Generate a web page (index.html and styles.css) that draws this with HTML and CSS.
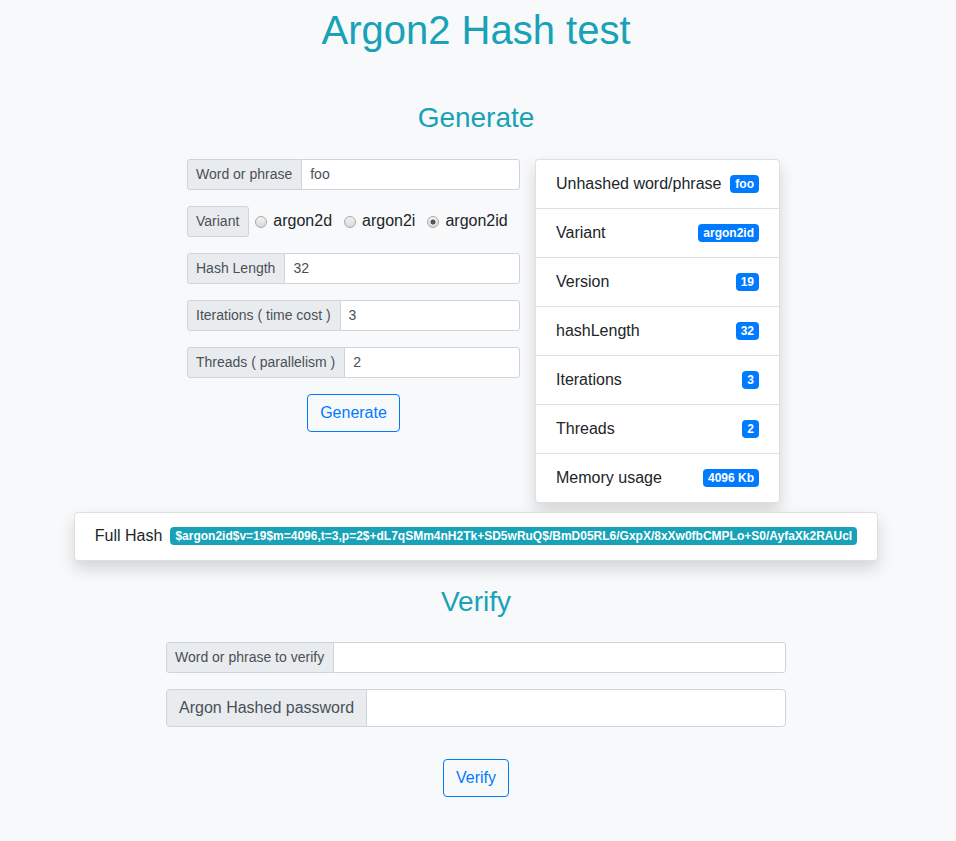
FILE: index.html
```html
<!DOCTYPE html>
<html lang="en">
<head>
<meta charset="utf-8">
<title>Argon2 Hash test</title>
<link rel="stylesheet" href="styles.css">
</head>
<body>
<div class="page">
  <h1 class="title">Argon2 Hash test</h1>
  <h3 class="section-title gen-title">Generate</h3>

  <div class="gen-row">
    <form class="gen-form">
      <div class="input-group sm">
        <span class="addon">Word or phrase</span>
        <input class="field" type="text" value="foo">
      </div>
      <div class="variant-row">
        <span class="addon variant-addon">Variant</span>
        <label class="radio-item"><input type="radio" name="variant" class="radio"><span>argon2d</span></label>
        <label class="radio-item"><input type="radio" name="variant" class="radio"><span>argon2i</span></label>
        <label class="radio-item"><input type="radio" name="variant" class="radio" checked><span>argon2id</span></label>
      </div>
      <div class="input-group sm">
        <span class="addon">Hash Length</span>
        <input class="field" type="text" value="32">
      </div>
      <div class="input-group sm">
        <span class="addon">Iterations ( time cost )</span>
        <input class="field" type="text" value="3">
      </div>
      <div class="input-group sm">
        <span class="addon">Threads ( parallelism )</span>
        <input class="field" type="text" value="2">
      </div>
      <div class="btn-row">
        <button type="button" class="btn-outline">Generate</button>
      </div>
    </form>

    <ul class="card list">
      <li class="list-item"><span>Unhashed word/phrase</span><span class="badge primary">foo</span></li>
      <li class="list-item"><span>Variant</span><span class="badge primary">argon2id</span></li>
      <li class="list-item"><span>Version</span><span class="badge primary">19</span></li>
      <li class="list-item"><span>hashLength</span><span class="badge primary">32</span></li>
      <li class="list-item"><span>Iterations</span><span class="badge primary">3</span></li>
      <li class="list-item"><span>Threads</span><span class="badge primary">2</span></li>
      <li class="list-item"><span>Memory usage</span><span class="badge primary">4096 Kb</span></li>
    </ul>
  </div>

  <div class="hash-wrap">
    <div class="card hash-card">
      <span>Full Hash</span>
      <span class="badge info">$argon2id$v=19$m=4096,t=3,p=2$+dL7qSMm4nH2Tk+SD5wRuQ$/BmD05RL6/GxpX/8xXw0fbCMPLo+S0/AyfaXk2RAUcI</span>
    </div>
  </div>

  <h3 class="section-title verify-title">Verify</h3>
  <form class="verify-form">
    <div class="input-group sm">
      <span class="addon">Word or phrase to verify</span>
      <input class="field" type="text">
    </div>
    <div class="input-group md">
      <span class="addon">Argon Hashed password</span>
      <input class="field" type="text">
    </div>
    <div class="btn-row verify-btn-row">
      <button type="button" class="btn-outline">Verify</button>
    </div>
  </form>
</div>
</body>
</html>
```

FILE: styles.css
```css
* { box-sizing: border-box; }

html, body {
  margin: 0;
  padding: 0;
  background: #f8f9fa;
}

body {
  font-family: "Liberation Sans", Arial, sans-serif;
  font-size: 16px;
  line-height: 1.5;
  color: #212529;
}

.page {
  padding-right: 4px;
  padding-bottom: 40px;
}

.title {
  margin: 6px 0 0;
  font-size: 40px;
  font-weight: 400;
  line-height: 1.2;
  text-align: center;
  color: #17a2b8;
}

.section-title {
  margin: 0;
  font-size: 28px;
  font-weight: 400;
  line-height: 1.2;
  text-align: center;
  color: #17a2b8;
}

.gen-title { margin-top: 47px; }

.gen-row {
  display: flex;
  justify-content: center;
  align-items: flex-start;
  gap: 15px;
  margin-top: 24px;
  padding-left: 15px;
}

.gen-form {
  width: 333px;
  display: flex;
  flex-direction: column;
  gap: 16px;
  margin: 0;
}

.input-group {
  display: flex;
  align-items: stretch;
  width: 100%;
}

.addon {
  display: flex;
  align-items: center;
  background: #e9ecef;
  border: 1px solid #ced4da;
  color: #495057;
  white-space: nowrap;
}

.field {
  flex: 1;
  min-width: 0;
  margin-left: -1px;
  background: #fff;
  border: 1px solid #ced4da;
  color: #495057;
  font-family: inherit;
  outline: none;
}

.input-group.sm { height: 31px; }
.input-group.sm .addon,
.input-group.sm .field {
  font-size: 14px;
  line-height: 21px;
  padding: 4px 8px;
}
.input-group.sm .addon { border-radius: 3px 0 0 3px; padding-right: 9px; }
.input-group.sm .field { border-radius: 0 3px 3px 0; }

.input-group.md { height: 38px; }
.input-group.md .addon,
.input-group.md .field {
  font-size: 16px;
  line-height: 24px;
  padding: 6px 12px;
}
.input-group.md .addon { border-radius: 4px 0 0 4px; }
.input-group.md .field { border-radius: 0 4px 4px 0; }

.variant-row {
  display: flex;
  align-items: center;
  height: 31px;
}

.variant-addon {
  height: 31px;
  font-size: 14px;
  line-height: 21px;
  padding: 4px 9px 4px 8px;
  border-radius: 3px;
}

.radio-item {
  display: inline-flex;
  align-items: center;
  gap: 6px;
  margin-left: 6px;
  margin-right: 6px;
  font-size: 16px;
  color: #212529;
  cursor: pointer;
}

.radio {
  appearance: none;
  -webkit-appearance: none;
  width: 12px;
  height: 12px;
  margin: 1px 0 0;
  border-radius: 50%;
  border: 1px solid #a9a9a9;
  background: linear-gradient(#f2f2f2, #d9d9d9);
}

.radio:checked {
  background:
    radial-gradient(circle, #555 0 2.2px, transparent 2.8px),
    linear-gradient(#f2f2f2, #d9d9d9);
}

.btn-row {
  display: flex;
  justify-content: center;
}

.btn-outline {
  height: 38px;
  padding: 6px 12px;
  font-family: inherit;
  font-size: 16px;
  line-height: 24px;
  color: #007bff;
  background: transparent;
  border: 1px solid #007bff;
  border-radius: 4px;
}

.card {
  background: #fff;
  border: 1px solid rgba(0, 0, 0, 0.125);
  border-radius: 4px;
  box-shadow: 0 8px 16px rgba(0, 0, 0, 0.15);
}

.list {
  width: 245px;
  margin: 0;
  padding: 0;
  list-style: none;
}

.list-item {
  display: flex;
  justify-content: space-between;
  align-items: center;
  padding: 12px 20px;
  line-height: 24px;
  border-top: 1px solid rgba(0, 0, 0, 0.125);
}

.list-item:first-child { border-top: 0; }

.badge {
  display: inline-block;
  padding: 3px 5px;
  font-size: 12px;
  font-weight: 700;
  line-height: 1;
  color: #fff;
  border-radius: 4px;
  white-space: nowrap;
}

.badge.primary { background: #007bff; }
.badge.info { background: #17a2b8; }

.hash-wrap {
  display: flex;
  justify-content: center;
  margin-top: 9px;
}

.hash-card {
  display: flex;
  align-items: center;
  gap: 8px;
  padding: 11px 20px 12px;
  line-height: 24px;
}

.verify-title { margin-top: 24px; }

.verify-form {
  width: 620px;
  margin: 24px auto 0;
  display: flex;
  flex-direction: column;
  gap: 16px;
}

.verify-btn-row { margin-top: 16px; }
```
